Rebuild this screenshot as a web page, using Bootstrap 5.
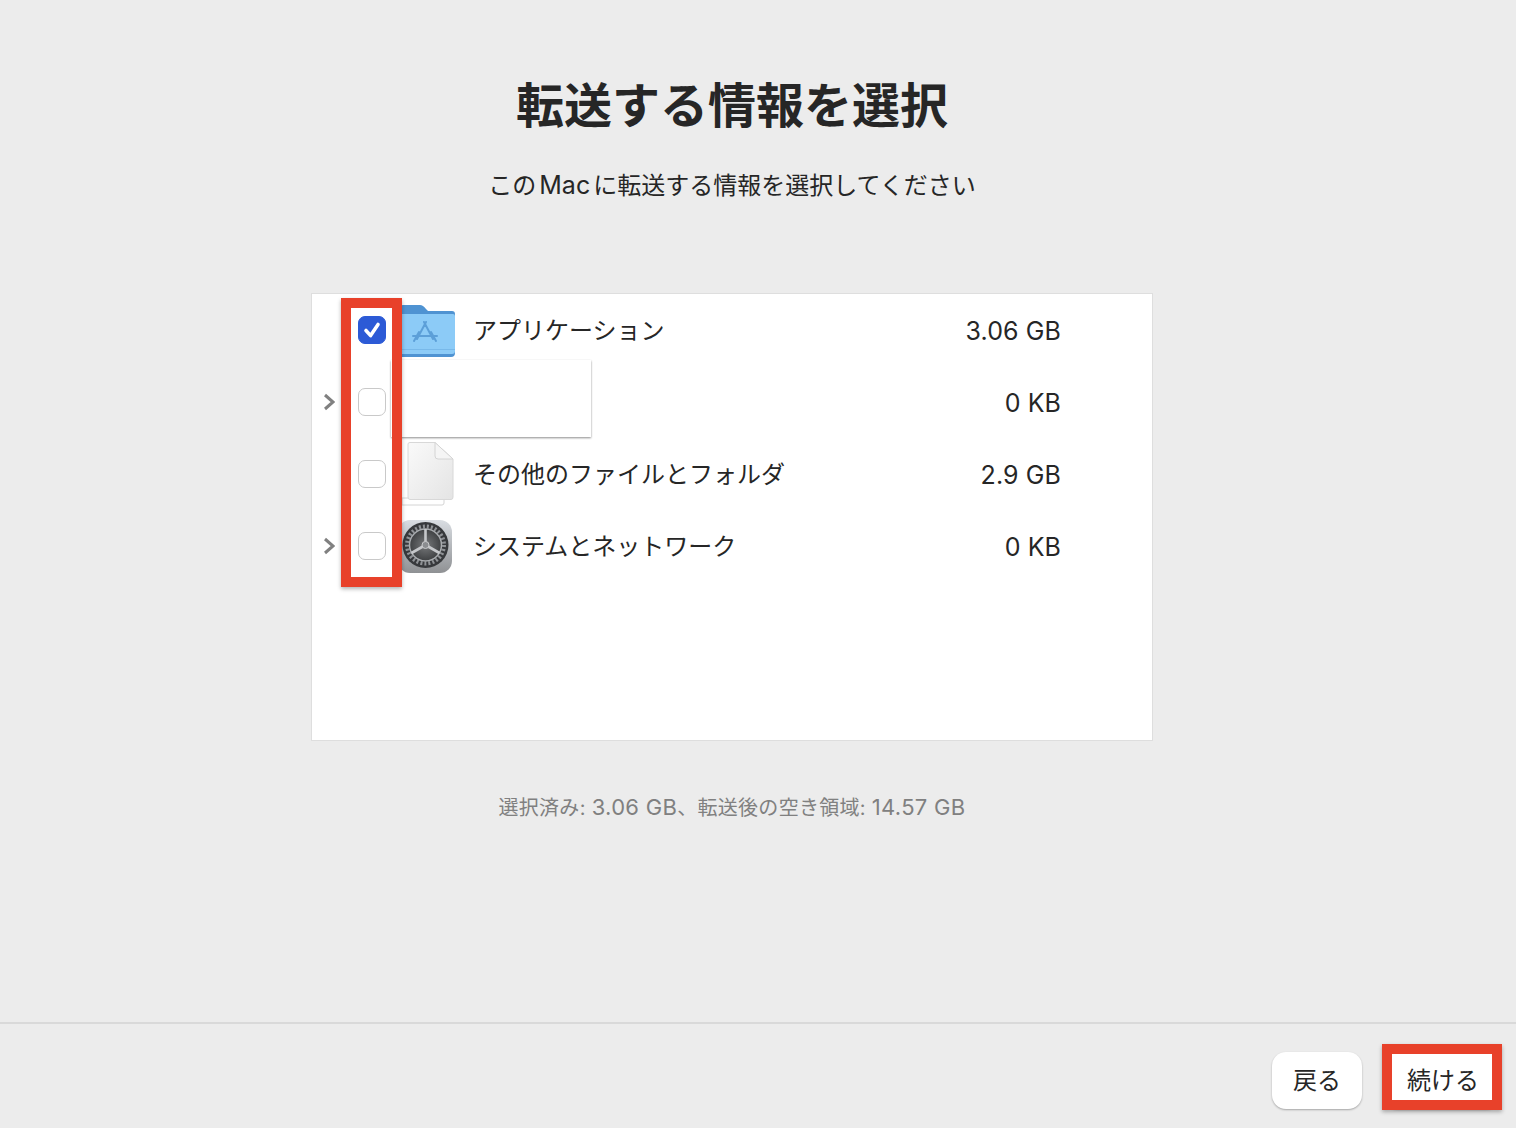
<!DOCTYPE html>
<html lang="ja">
<head>
    <meta charset="UTF-8">
    <meta name="viewport" content="width=device-width, initial-scale=1.0">
    <title>転送する情報を選択</title>
    <link href="https://cdn.jsdelivr.net/npm/bootstrap@5.3.2/dist/css/bootstrap.min.css" rel="stylesheet">
    <style>
        body {
            background-color: #ececec;
            color: #262626;
            font-family: Inter, "Noto Sans CJK JP", sans-serif;
        }
        .page-main {
            width: 1464px;
            padding-top: 71px;
        }
        .page-title {
            font-family: "Noto Sans CJK JP", sans-serif;
            font-size: 48px;
            font-weight: 700;
            line-height: 62px;
            margin-bottom: 35px;
        }
        .page-sub {
            font-size: 24px;
            line-height: 36px;
            height: 36px;
            margin-bottom: 89px;
        }
        .latin-word {
            font-size: 25px;
            line-height: 1;
            margin: 0 3px;
        }
        .file-panel {
            width: 842px;
            height: 448px;
            background-color: #fff;
            border: 1px solid #dedede;
        }
        .file-row {
            height: 72px;
            font-size: 24px;
            padding-right: 91px;
        }
        .row-label {
            padding-top: 2px;
        }
        .size-text {
            font-size: 25px;
            letter-spacing: 0.1px;
            padding-top: 4px;
        }
        .row-arrow {
            width: 46px;
            padding-left: 11px;
            flex-shrink: 0;
        }
        .file-panel .form-check-input {
            width: 28px;
            height: 28px;
            margin: 0 14px 0 0;
            border: 1px solid #c9c9c9;
            border-radius: 7px;
            flex-shrink: 0;
        }
        .file-panel .form-check-input:checked {
            background-color: #2c5ad6;
            border-color: #2c5ad6;
            --bs-form-check-bg-image: url("data:image/svg+xml,%3csvg xmlns='http://www.w3.org/2000/svg' viewBox='0 0 28 28'%3e%3cpath fill='none' stroke='%23fff' stroke-linecap='round' stroke-linejoin='round' stroke-width='3.8' d='M7.5 14.5 12.5 20 20.5 8'/%3e%3c/svg%3e");
        }
        .row-icon {
            width: 56px;
            height: 56px;
            margin-right: 17px;
            flex-shrink: 0;
        }
        .row-icon-tall {
            height: 64px;
        }
        .mark-frame {
            position: absolute;
            border: 10px solid #e8412a;
            box-shadow: 0 2px 4px rgba(0, 0, 0, 0.3);
            pointer-events: none;
        }
        .frame-checks {
            left: 29px;
            top: 4px;
            width: 61px;
            height: 289px;
        }
        .blank-patch {
            position: absolute;
            left: 79px;
            top: 66px;
            width: 200px;
            height: 77px;
            background-color: #fff;
            box-shadow: 0 1px 2px rgba(0, 0, 0, 0.45);
        }
        .status-line {
            font-size: 20px;
            letter-spacing: 0.3px;
            line-height: 32px;
            height: 32px;
            color: #808080;
            margin-top: 51px;
        }
        .status-num {
            font-size: 22px;
            line-height: 1;
        }
        .page-foot {
            height: 106px;
            border-top: 2px solid #d9d9d9;
            padding-top: 28px;
            padding-right: 16px;
            gap: 22px;
        }
        .foot-btn {
            height: 57px;
            background-color: #fff;
            color: #262626;
            border: 0;
            border-radius: 14px;
            font-size: 24px;
            line-height: 57px;
            padding: 0;
            box-shadow: 0 1px 2px rgba(0, 0, 0, 0.3);
        }
        .btn-back { width: 90px; }
        .btn-next { width: 116px; padding-left: 2px; }
        .frame-next {
            left: -2px;
            top: -8px;
            width: 120px;
            height: 66px;
        }
    </style>
</head>
<body>
    <div class="d-flex flex-column vh-100">
        <div class="page-main flex-grow-1 text-center">
            <h1 class="page-title">転送する情報を選択</h1>
            <p class="page-sub">この<span class="latin-word">Mac</span>に転送する情報を選択してください</p>

            <div class="file-panel position-relative mx-auto text-start">
                <div class="file-row d-flex align-items-center">
                    <div class="row-arrow"></div>
                    <input class="form-check-input" type="checkbox" checked>
                    <svg class="row-icon" viewBox="0 0 56 56">
                        <path d="M0 12 V6 Q0 3 3 3 H20 Q23 3 26 7 L28 9 H52 Q55 9 55 12 V51 Q55 55 51 55 H0 Z" fill="#4f93d2"/>
                        <path d="M0 14 Q0 12 2 12 H53 Q55 12 55 14 V49 Q55 52 52 52 H0 Z" fill="#8ccbf7"/>
                        <path d="M0 47 H55 V48 H0 Z" fill="#78b9ea"/>
                        <path d="M24 20 L33 37 M26 20 L17 37 M13 34 H37 M31 30 L36 39 M19 30 L14 39" fill="none" stroke="#5c9fd8" stroke-width="2" stroke-linecap="round"/>
                    </svg>
                    <span class="row-label flex-grow-1">アプリケーション</span>
                    <span class="size-text">3.06 GB</span>
                </div>
                <div class="file-row d-flex align-items-center">
                    <div class="row-arrow">
                        <svg width="12" height="18" viewBox="0 0 12 18" class="d-block"><path d="M2 2 L10 9 L2 16" fill="none" stroke="#808080" stroke-width="3"/></svg>
                    </div>
                    <input class="form-check-input" type="checkbox">
                    <div class="row-icon"></div>
                    <span class="row-label flex-grow-1"></span>
                    <span class="size-text">0 KB</span>
                </div>
                <div class="file-row d-flex align-items-center">
                    <div class="row-arrow"></div>
                    <input class="form-check-input" type="checkbox">
                    <svg class="row-icon row-icon-tall" viewBox="0 0 56 64">
                        <defs>
                            <linearGradient id="pageFill" x1="0" y1="0" x2="1" y2="1">
                                <stop offset="0" stop-color="#fafafa"/>
                                <stop offset="1" stop-color="#e4e4e4"/>
                            </linearGradient>
                        </defs>
                        <path d="M2 56 H44 V61 Q44 63 42 63 H2 Z" fill="#fff" stroke="#d4d4d4" stroke-width="1"/>
                        <path d="M8 2 Q8 0.5 10 0.5 H35 L53 17 V55 Q53 57.5 51 57.5 H10 Q8 57.5 8 55 Z" fill="url(#pageFill)" stroke="#d8d8d8"/>
                        <path d="M35 0.5 V14 Q35 17 38 17 H53 Z" fill="#f5f5f5" stroke="#d4d4d4"/>
                    </svg>
                    <span class="row-label flex-grow-1">その他のファイルとフォルダ</span>
                    <span class="size-text">2.9 GB</span>
                </div>
                <div class="file-row d-flex align-items-center">
                    <div class="row-arrow">
                        <svg width="12" height="18" viewBox="0 0 12 18" class="d-block"><path d="M2 2 L10 9 L2 16" fill="none" stroke="#808080" stroke-width="3"/></svg>
                    </div>
                    <input class="form-check-input" type="checkbox">
                    <svg class="row-icon" viewBox="0 0 56 56">
                        <defs>
                            <linearGradient id="gearBack" x1="0" y1="0" x2="0" y2="1">
                                <stop offset="0" stop-color="#d9dde2"/>
                                <stop offset="1" stop-color="#8f9194"/>
                            </linearGradient>
                            <radialGradient id="gearFace">
                                <stop offset="0" stop-color="#77797b"/>
                                <stop offset="1" stop-color="#3f4143"/>
                            </radialGradient>
                        </defs>
                        <rect x="-2" y="2" width="54" height="53" rx="12" fill="url(#gearBack)"/>
                        <circle cx="25.5" cy="27" r="23" fill="#37393c"/>
                        <circle cx="25.5" cy="27" r="18.5" fill="none" stroke="#8f9296" stroke-width="4" stroke-dasharray="2 2"/>
                        <circle cx="25.5" cy="27" r="16" fill="url(#gearFace)" stroke="#a9acaf" stroke-width="1.5"/>
                        <path d="M25.5 27 V11 M25.5 27 L11.5 35 M25.5 27 L39.5 35" stroke="#c5c7ca" stroke-width="2.6"/>
                        <circle cx="25.5" cy="27" r="3.5" fill="#8b8d90" stroke="#c9cacc"/>
                    </svg>
                    <span class="row-label flex-grow-1">システムとネットワーク</span>
                    <span class="size-text">0 KB</span>
                </div>

                <div class="blank-patch"></div>
                <div class="mark-frame frame-checks"></div>
            </div>

            <p class="status-line mb-0">選択済み: <span class="status-num">3.06 GB</span>、転送後の空き領域: <span class="status-num">14.57 GB</span></p>
        </div>

        <div class="page-foot d-flex justify-content-end align-items-start">
            <button class="btn foot-btn btn-back" type="button">戻る</button>
            <div class="position-relative">
                <button class="btn foot-btn btn-next d-block" type="button">続ける</button>
                <div class="mark-frame frame-next"></div>
            </div>
        </div>
    </div>
</body>
</html>
